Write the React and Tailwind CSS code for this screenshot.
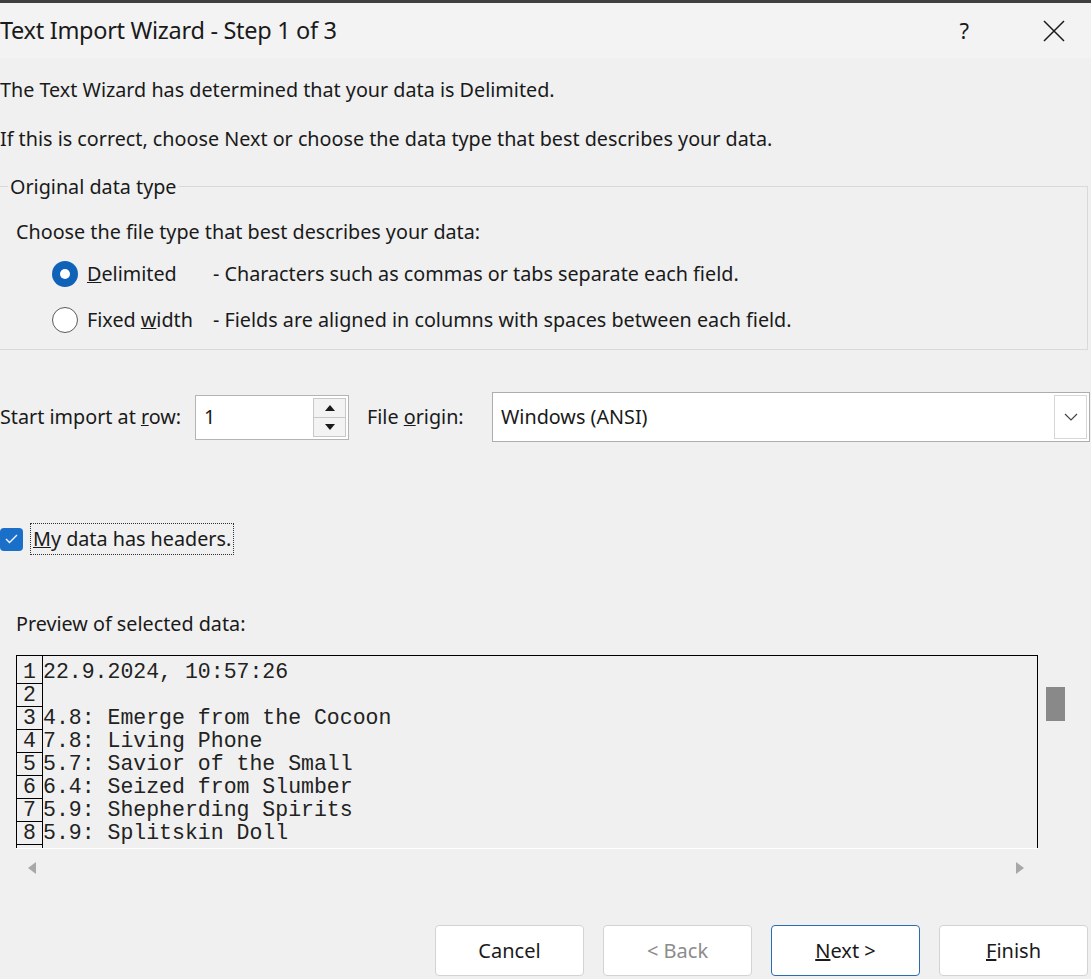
const ui = { fontFamily: '"Noto Sans", "Open Sans", sans-serif' };
const mono = { fontFamily: '"Liberation Mono", "Courier New", monospace' };

const rows = [
  "22.9.2024, 10:57:26",
  "",
  "4.8: Emerge from the Cocoon",
  "7.8: Living Phone",
  "5.7: Savior of the Small",
  "6.4: Seized from Slumber",
  "5.9: Shepherding Spirits",
  "5.9: Splitskin Doll",
];

function Btn({ children, primary, disabled }) {
  return (
    <button
      type="button"
      className={`h-[51px] w-[149px] rounded-[4px] border bg-white text-[20px] ${
        primary ? "border-[#2b6cb0]" : "border-[#d3d3d3]"
      } ${disabled ? "text-[#8c8c8c]" : "text-[#1a1a1a]"}`}
    >
      {children}
    </button>
  );
}

export default function App() {
  return (
    <div className="relative h-[979px] w-[1091px] overflow-hidden bg-[#f0f0f0] text-[#1a1a1a]" style={ui}>
      <div className="h-[3px] bg-[#3f3f3f]" />

      {/* title bar */}
      <div className="flex h-[55px] items-center bg-[#f3f3f3]">
        <span className="text-[23.5px] tracking-[-0.3px]">Text Import Wizard - Step 1 of 3</span>
        <span className="ml-auto mr-[74px] text-[22px]">?</span>
        <svg width="22" height="22" viewBox="0 0 22 22" className="mr-[26px]">
          <path d="M1 1 L21 21 M21 1 L1 21" stroke="#1a1a1a" strokeWidth="1.5" />
        </svg>
      </div>

      <p className="mt-[17px] text-[19.75px] leading-[30px]">The Text Wizard has determined that your data is Delimited.</p>
      <p className="mt-[19px] text-[19.75px] leading-[30px]">If this is correct, choose Next or choose the data type that best describes your data.</p>

      {/* group box */}
      <div className="relative mt-[32px] h-[164px] w-[1088px] border border-[#d9d9d9] border-l-0">
        <span className="absolute left-[8px] top-[-14px] bg-[#f0f0f0] px-[2px] text-[19.75px] leading-[28px]">
          Original data type
        </span>
        <p className="ml-[16px] mt-[30px] text-[19.75px] leading-[30px]">Choose the file type that best describes your data:</p>
        <div className="ml-[52px] mt-[12px] flex items-center text-[19.75px] leading-[30px]">
          <span className="flex h-[26px] w-[26px] items-center justify-center rounded-full bg-[#0f62b8]">
            <span className="h-[10px] w-[10px] rounded-full bg-white" />
          </span>
          <span className="ml-[9px] w-[126px]">
            <u>D</u>elimited
          </span>
          <span>- Characters such as commas or tabs separate each field.</span>
        </div>
        <div className="ml-[52px] mt-[16px] flex items-center text-[19.75px] leading-[30px]">
          <span className="h-[26px] w-[26px] rounded-full border-[1.5px] border-[#5a5a5a] bg-white" />
          <span className="ml-[9px] w-[126px]">
            Fixed <u>w</u>idth
          </span>
          <span>- Fields are aligned in columns with spaces between each field.</span>
        </div>
      </div>

      {/* start row / file origin */}
      <div className="mt-[42px] flex items-center text-[19.75px]">
        <span className="w-[195px]">
          Start import at <u>r</u>ow:
        </span>
        <div className="flex h-[45px] w-[154px] items-center border border-[#b4b4b4] bg-white">
          <span className="ml-[8px] flex-1">1</span>
          <div className="mr-[2px] flex h-[39px] w-[33px] flex-col border border-[#c8c8c8]">
            <div className="flex flex-1 items-center justify-center border-b border-[#c8c8c8] bg-[#f3f3f3]">
              <svg width="10" height="6" viewBox="0 0 10 6"><path d="M0 6 L5 0 L10 6Z" fill="#1a1a1a" /></svg>
            </div>
            <div className="flex flex-1 items-center justify-center bg-[#f3f3f3]">
              <svg width="10" height="6" viewBox="0 0 10 6"><path d="M0 0 L5 6 L10 0Z" fill="#1a1a1a" /></svg>
            </div>
          </div>
        </div>
        <span className="ml-[18px] w-[125px]">
          File <u>o</u>rigin:
        </span>
        <div className="flex h-[50px] w-[598px] items-center border border-[#adadad] bg-white">
          <span className="ml-[8px] flex-1">Windows (ANSI)</span>
          <div className="mr-[2px] flex h-[44px] w-[33px] items-center justify-center border border-[#d6d6d6]">
            <svg width="14" height="8" viewBox="0 0 14 8"><path d="M1 1 L7 7 L13 1" fill="none" stroke="#444" strokeWidth="1.2" /></svg>
          </div>
        </div>
      </div>

      {/* checkbox */}
      <div className="mt-[81px] flex items-center text-[19.75px]">
        <span className="flex h-[23px] w-[23px] items-center justify-center rounded-[4px] bg-[#1a6fc9]">
          <svg width="13" height="10" viewBox="0 0 13 10"><path d="M1 5 L4.5 8.5 L12 1" fill="none" stroke="white" strokeWidth="1.3" /></svg>
        </span>
        <span className="ml-[7px] border border-dotted border-[#333] px-[2px] leading-[30px]">
          <u>M</u>y data has headers.
        </span>
      </div>

      <p className="ml-[16px] mt-[54px] text-[19.75px] leading-[30px]">Preview of selected data:</p>

      {/* preview */}
      <div className="ml-[16px] mt-[16px] flex">
        <div className="h-[193px] w-[1022px] overflow-hidden border border-b-0 border-black">
          <div className="h-[5px] w-[26px] border-r border-black" />
          {rows.map((r, i) => (
            <div key={i} className="flex h-[23px] text-[21.5px] leading-[23px] text-[#222]" style={mono}>
              <span className="w-[26px] border-b border-r border-black text-center">{i + 1}</span>
              <span className="whitespace-pre">{r}</span>
            </div>
          ))}
          <div className="h-[23px] w-[26px] border-r border-black" />
        </div>
        <div className="ml-[8px] mt-[32px] h-[34px] w-[19px] bg-[#898989]" />
      </div>
      <div className="ml-[16px] h-px w-[1022px] bg-white" />
      <div className="ml-[28px] mt-[13px] flex w-[996px] items-center justify-between">
        <svg width="8" height="12" viewBox="0 0 8 12"><path d="M8 0 L0 6 L8 12Z" fill="#a8a8a8" /></svg>
        <svg width="8" height="12" viewBox="0 0 8 12"><path d="M0 0 L8 6 L0 12Z" fill="#a8a8a8" /></svg>
      </div>

      {/* buttons */}
      <div className="mt-[51px] flex justify-end gap-[19px] pr-[3px]">
        <Btn>Cancel</Btn>
        <Btn disabled>&lt; Back</Btn>
        <Btn primary>
          <u>N</u>ext &gt;
        </Btn>
        <Btn>
          <u>F</u>inish
        </Btn>
      </div>
    </div>
  );
}
